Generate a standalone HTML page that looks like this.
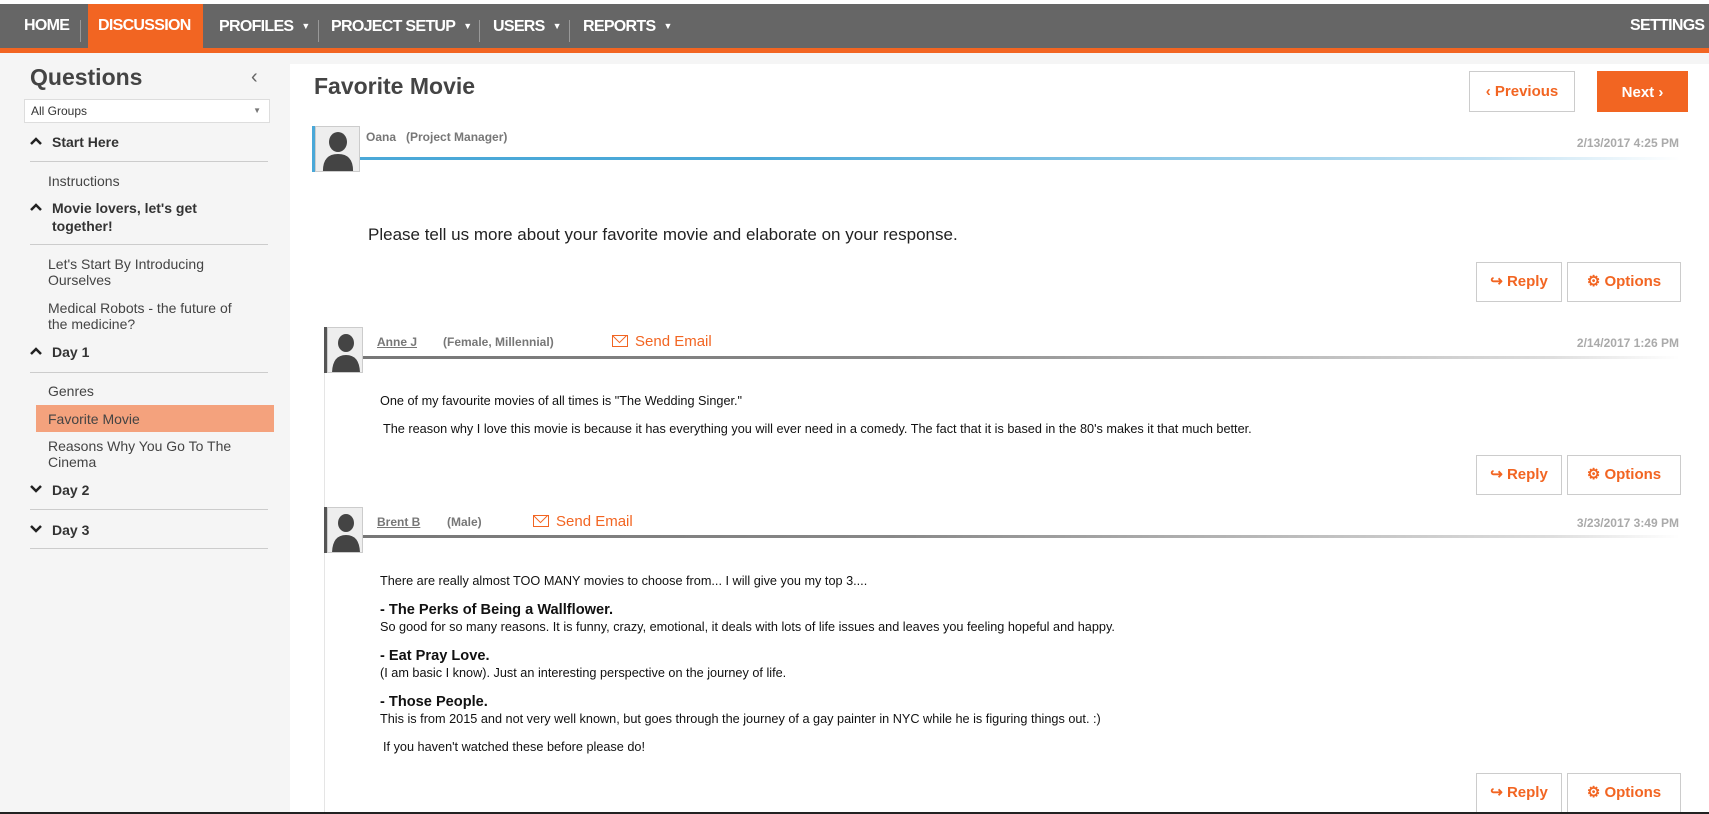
<!DOCTYPE html>
<html><head><meta charset="utf-8"><style>
*{margin:0;padding:0;box-sizing:border-box}
body{width:1709px;height:814px;overflow:hidden;background:#fff;font-family:"Liberation Sans",Arial,sans-serif;position:relative;color:#333}
.a{position:absolute;white-space:nowrap}
.nav{position:absolute;left:0;top:4px;width:1709px;height:44px;background:#666}
.navline{position:absolute;left:0;top:48px;width:1709px;height:5px;background:#f26522}
.ni{position:absolute;top:4px;height:44px;line-height:44px;color:#fff;font-weight:bold;font-size:16px;letter-spacing:-0.7px}
.sep{position:absolute;top:20px;width:1px;height:22px;background:#999}
.car{font-size:9px;margin-left:8px;vertical-align:2px}
.side{position:absolute;left:0;top:53px;width:290px;height:761px;background:#f5f5f5}
.topg{position:absolute;left:290px;top:53px;width:1419px;height:11px;background:#f5f5f5}
.si{position:absolute;left:48px;font-size:14px;color:#444;line-height:16px}
.sh{position:absolute;left:52px;font-size:14px;font-weight:bold;color:#333;line-height:18px}
.ch{position:absolute;left:30px}
.div{position:absolute;left:30px;width:238px;height:1px;background:#ccc}
.btn{position:absolute;border:1px solid #ccc;background:#fff;color:#f26522;font-weight:bold;font-size:15px;text-align:center}
.av{position:absolute;background:#eee;border:1px solid #ccc;overflow:hidden}
.date{position:absolute;right:30px;font-size:12px;font-weight:bold;color:#aaa}
.nm{font-size:12px;font-weight:bold;color:#777}
.t{position:absolute;font-size:12.7px;color:#111}
.b{position:absolute;font-size:14.6px;font-weight:bold;color:#111}
</style></head><body>
<div class="nav"></div><div class="navline"></div>
<div class="a" style="left:88px;top:4px;width:115px;height:49px;background:#f26522"></div>
<div class="ni" style="left:24px">HOME</div>
<div class="sep" style="left:80px"></div>
<div class="ni" style="left:98px">DISCUSSION</div>
<div class="ni" style="left:219px">PROFILES<span class="car">▼</span></div>
<div class="sep" style="left:318px"></div>
<div class="ni" style="left:331px">PROJECT SETUP<span class="car">▼</span></div>
<div class="sep" style="left:479px"></div>
<div class="ni" style="left:493px">USERS<span class="car">▼</span></div>
<div class="sep" style="left:569px"></div>
<div class="ni" style="left:583px">REPORTS<span class="car">▼</span></div>
<div class="ni" style="left:1630px">SETTINGS</div>

<div class="side"></div><div class="topg"></div>
<div class="a" style="left:30px;top:64px;font-size:23px;font-weight:bold;color:#444">Questions</div>
<div class="a" style="left:251px;top:66px;font-size:20px;color:#666">‹</div>
<div class="a" style="left:24px;top:99px;width:246px;height:24px;background:#fff;border:1px solid #ddd;font-size:12px;line-height:22px;padding-left:6px;color:#333">All Groups<span style="position:absolute;right:8px;font-size:8px;color:#777">▼</span></div>
<svg class="ch" style="top:136px" width="12" height="10"><path d="M1 8 L6 3 L11 8" stroke="#222" stroke-width="2.5" fill="none"/></svg>
<div class="sh" style="top:133px">Start Here</div>
<div class="div" style="top:161px"></div>
<div class="si" style="top:173px">Instructions</div>
<svg class="ch" style="top:202px" width="12" height="10"><path d="M1 8 L6 3 L11 8" stroke="#222" stroke-width="2.5" fill="none"/></svg>
<div class="sh" style="top:199px">Movie lovers, let's get<br>together!</div>
<div class="div" style="top:244px"></div>
<div class="si" style="top:256px">Let's Start By Introducing<br>Ourselves</div>
<div class="si" style="top:300px">Medical Robots - the future of<br>the medicine?</div>
<svg class="ch" style="top:346px" width="12" height="10"><path d="M1 8 L6 3 L11 8" stroke="#222" stroke-width="2.5" fill="none"/></svg>
<div class="sh" style="top:343px">Day 1</div>
<div class="div" style="top:372px"></div>
<div class="si" style="top:383px">Genres</div>
<div class="a" style="left:36px;top:405px;width:238px;height:27px;background:#f4a27d"></div>
<div class="si" style="top:411px">Favorite Movie</div>
<div class="si" style="top:438px">Reasons Why You Go To The<br>Cinema</div>
<svg class="ch" style="top:484px" width="12" height="10"><path d="M1 2 L6 7 L11 2" stroke="#222" stroke-width="2.5" fill="none"/></svg>
<div class="sh" style="top:481px">Day 2</div>
<div class="div" style="top:509px"></div>
<svg class="ch" style="top:524px" width="12" height="10"><path d="M1 2 L6 7 L11 2" stroke="#222" stroke-width="2.5" fill="none"/></svg>
<div class="sh" style="top:521px">Day 3</div>
<div class="div" style="top:548px"></div>

<div class="a" style="left:314px;top:73px;font-size:23px;font-weight:bold;color:#444">Favorite Movie</div>
<div class="btn" style="left:1469px;top:71px;width:106px;height:41px;line-height:39px">‹ Previous</div>
<div class="btn" style="left:1597px;top:71px;width:91px;height:41px;line-height:41px;background:#f26522;border-color:#f26522;color:#fff">Next ›</div>

<!-- post 1 -->
<div class="a" style="left:312px;top:126px;width:3px;height:46px;background:#4aa8d8"></div>
<div class="av" style="left:315px;top:126px;width:45px;height:46px"><svg width="45" height="46"><ellipse cx="22" cy="15" rx="9" ry="10" fill="#444"/><path d="M7 46 Q6 27 22 27 Q38 27 37 46Z" fill="#444"/></svg></div>
<div class="a nm" style="left:366px;top:130px">Oana &nbsp;&nbsp;(Project Manager)</div>
<div class="date" style="top:136px">2/13/2017 4:25 PM</div>
<div class="a" style="left:360px;top:157px;width:1320px;height:3px;background:linear-gradient(90deg,#4aa8d8,#4aa8d8 30%,#bfe0f2 85%,#fff)"></div>
<div class="a" style="left:368px;top:225px;font-size:17px;color:#222">Please tell us more about your favorite movie and elaborate on your response.</div>
<div class="btn" style="left:1476px;top:262px;width:86px;height:40px;line-height:38px">↪ Reply</div>
<div class="btn" style="left:1567px;top:262px;width:114px;height:40px;line-height:38px">⚙ Options</div>

<!-- post 2 -->
<div class="a" style="left:324px;top:373px;width:1px;height:441px;background:#e5e5e5"></div>
<div class="a" style="left:324px;top:327px;width:3px;height:46px;background:#555"></div>
<div class="av" style="left:327px;top:327px;width:36px;height:46px"><svg width="36" height="46"><ellipse cx="18" cy="15" rx="8" ry="9" fill="#444"/><path d="M4 46 Q4 27 18 27 Q32 27 32 46Z" fill="#444"/></svg></div>
<div class="a nm" style="left:377px;top:335px;text-decoration:underline">Anne J</div>
<div class="a nm" style="left:443px;top:335px">(Female, Millennial)</div>
<div class="a" style="left:612px;top:333px;font-size:15px;color:#f26522"><span style="display:inline-block;width:16px;height:12px;border:1.5px solid #f26522;margin-right:7px;vertical-align:-1px;position:relative;overflow:hidden"><span style="position:absolute;left:1px;top:-6px;width:11px;height:11px;border:1.5px solid #f26522;transform:rotate(45deg)"></span></span>Send Email</div>
<div class="date" style="top:336px">2/14/2017 1:26 PM</div>
<div class="a" style="left:363px;top:356px;width:1317px;height:3px;background:linear-gradient(90deg,#777,#888 40%,#ddd 90%,#fff)"></div>
<div class="t" style="left:380px;top:394px">One of my favourite movies of all times is "The Wedding Singer."</div>
<div class="t" style="left:383px;top:422px">The reason why I love this movie is because it has everything you will ever need in a comedy. The fact that it is based in the 80's makes it that much better.</div>
<div class="btn" style="left:1476px;top:455px;width:86px;height:40px;line-height:38px">↪ Reply</div>
<div class="btn" style="left:1567px;top:455px;width:114px;height:40px;line-height:38px">⚙ Options</div>

<!-- post 3 -->
<div class="a" style="left:324px;top:507px;width:3px;height:46px;background:#555"></div>
<div class="av" style="left:327px;top:507px;width:36px;height:46px"><svg width="36" height="46"><ellipse cx="18" cy="15" rx="8" ry="9" fill="#444"/><path d="M4 46 Q4 27 18 27 Q32 27 32 46Z" fill="#444"/></svg></div>
<div class="a nm" style="left:377px;top:515px;text-decoration:underline">Brent B</div>
<div class="a nm" style="left:447px;top:515px">(Male)</div>
<div class="a" style="left:533px;top:513px;font-size:15px;color:#f26522"><span style="display:inline-block;width:16px;height:12px;border:1.5px solid #f26522;margin-right:7px;vertical-align:-1px;position:relative;overflow:hidden"><span style="position:absolute;left:1px;top:-6px;width:11px;height:11px;border:1.5px solid #f26522;transform:rotate(45deg)"></span></span>Send Email</div>
<div class="date" style="top:516px">3/23/2017 3:49 PM</div>
<div class="a" style="left:363px;top:535px;width:1317px;height:3px;background:linear-gradient(90deg,#777,#888 40%,#ddd 90%,#fff)"></div>
<div class="t" style="left:380px;top:574px">There are really almost TOO MANY movies to choose from... I will give you my top 3....</div>
<div class="b" style="left:380px;top:602px">- The Perks of Being a Wallflower.</div>
<div class="t" style="left:380px;top:620px">So good for so many reasons. It is funny, crazy, emotional, it deals with lots of life issues and leaves you feeling hopeful and happy.</div>
<div class="b" style="left:380px;top:648px">- Eat Pray Love.</div>
<div class="t" style="left:380px;top:666px">(I am basic I know). Just an interesting perspective on the journey of life.</div>
<div class="b" style="left:380px;top:694px">- Those People.</div>
<div class="t" style="left:380px;top:712px">This is from 2015 and not very well known, but goes through the journey of a gay painter in NYC while he is figuring things out. :)</div>
<div class="t" style="left:383px;top:740px">If you haven't watched these before please do!</div>
<div class="btn" style="left:1476px;top:773px;width:86px;height:40px;line-height:38px">↪ Reply</div>
<div class="btn" style="left:1567px;top:773px;width:114px;height:40px;line-height:38px">⚙ Options</div>
<div class="a" style="left:0;top:812px;width:1709px;height:2px;background:#222"></div>
</body></html>
